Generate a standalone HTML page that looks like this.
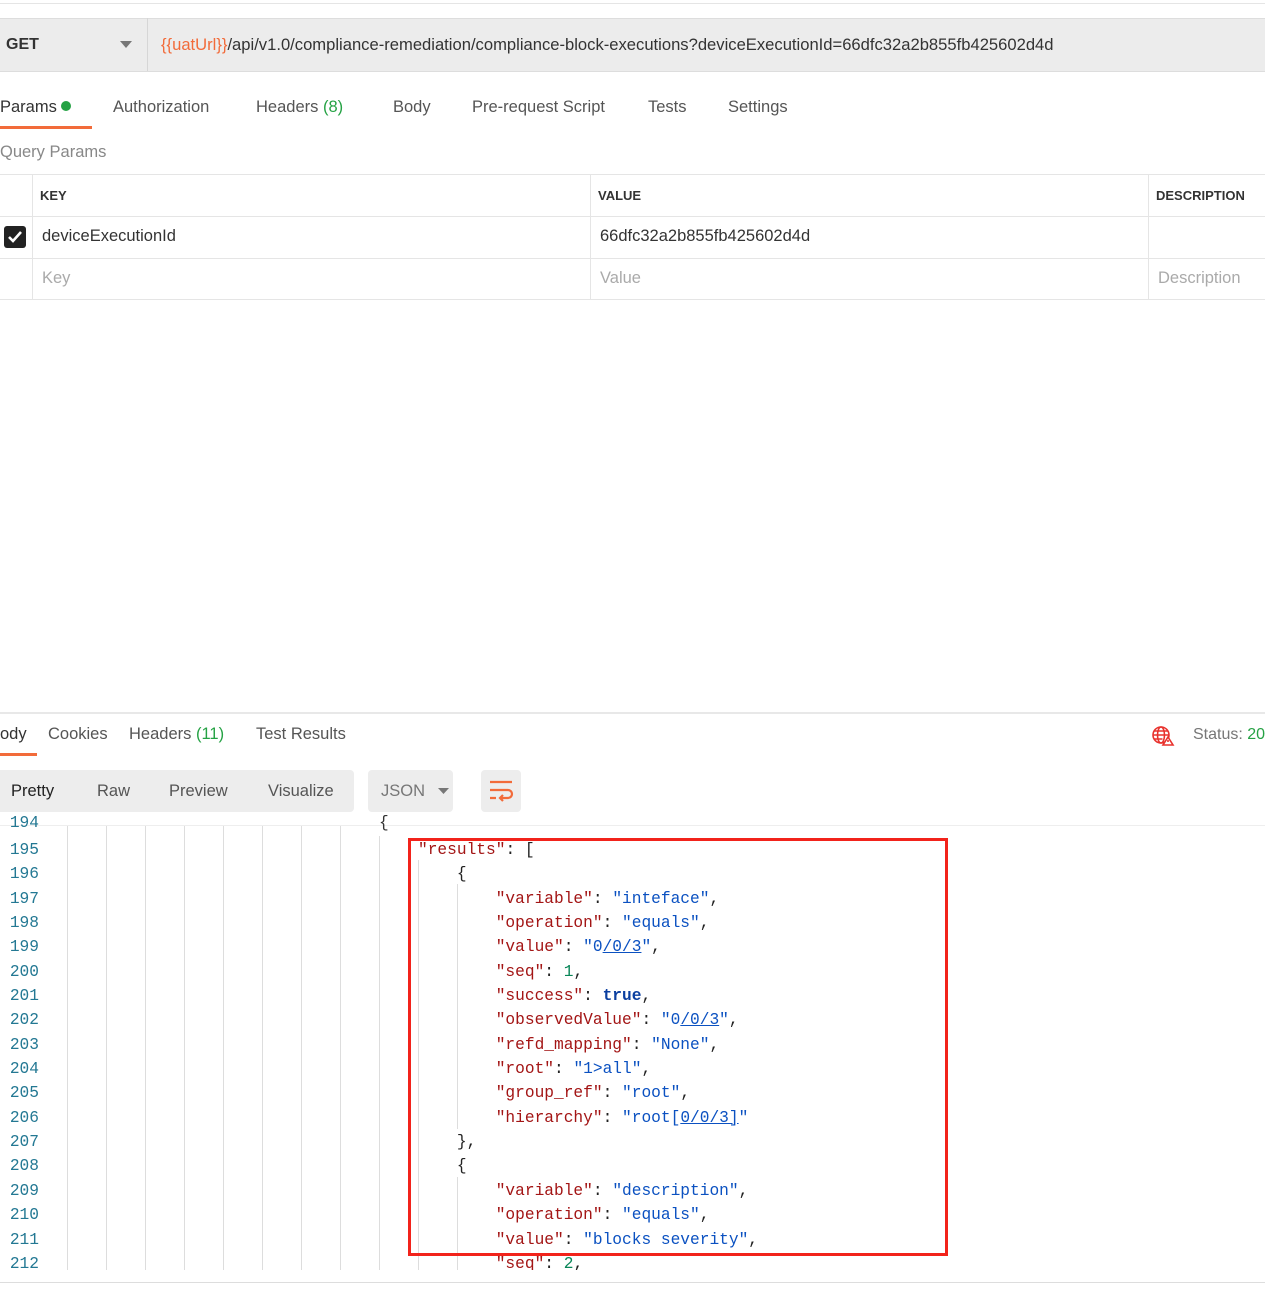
<!DOCTYPE html><html><head><style>
body{margin:0;width:1265px;height:1289px;position:relative;background:#fff;font-family:"Liberation Sans",sans-serif;overflow:hidden;color:#333}
.a{position:absolute;white-space:nowrap}
.t{font-size:16.5px;color:#555}
.g{color:#25a244}
.code{font-family:"Liberation Mono",monospace;font-size:16.2px}
.k{color:#a31515}.s{color:#0b51c1}.n{color:#098658}.b{color:#0b3fa0;font-weight:bold}
.ln{position:absolute;left:0;width:39px;text-align:right;color:#237893;font-family:"Liberation Mono",monospace;font-size:16.2px}
.vl{position:absolute;width:1px;background:#ddd}
</style></head><body>
<div class="a" style="left:0;top:3px;width:1265px;height:1px;background:#e5e5e5"></div>
<div class="a" style="left:0;top:18px;width:1265px;height:52px;background:#ececec;border-top:1px solid #ddd;border-bottom:1px solid #ddd"></div>
<div class="a" style="left:147px;top:18px;width:1px;height:53px;background:#d6d6d6"></div>
<div class="a" style="left:6px;top:36px;font-size:16px;font-weight:bold;color:#333">GET</div>
<svg class="a" style="left:120px;top:41px" width="12" height="8"><path d="M0 0h12L6 7z" fill="#777"/></svg>
<div class="a" style="left:161px;top:35px;font-size:16.6px;color:#333"><span style="color:#f26b3a">{{uatUrl}}</span>/api/v1.0/compliance-remediation/compliance-block-executions?deviceExecutionId=66dfc32a2b855fb425602d4d</div>
<div class="a t" style="left:0;top:98px;color:#333">Params <span style="display:inline-block;width:10px;height:10px;border-radius:50%;background:#25a244;vertical-align:1px"></span></div>
<div class="a" style="left:0;top:126px;width:92px;height:3px;background:#f26b3a"></div>
<div class="a t" style="left:113px;top:98px">Authorization</div>
<div class="a t" style="left:256px;top:98px">Headers <span class="g">(8)</span></div>
<div class="a t" style="left:393px;top:98px">Body</div>
<div class="a t" style="left:472px;top:98px">Pre-request Script</div>
<div class="a t" style="left:648px;top:98px">Tests</div>
<div class="a t" style="left:728px;top:98px">Settings</div>
<div class="a" style="left:0;top:143px;font-size:16.5px;color:#888">Query Params</div>
<div class="a" style="left:0;top:174px;width:1265px;height:1px;background:#e5e5e5"></div>
<div class="a" style="left:0;top:216px;width:1265px;height:1px;background:#e5e5e5"></div>
<div class="a" style="left:0;top:258px;width:1265px;height:1px;background:#e5e5e5"></div>
<div class="a" style="left:0;top:299px;width:1265px;height:1px;background:#e5e5e5"></div>
<div class="a" style="left:32px;top:174px;width:1px;height:126px;background:#e5e5e5"></div>
<div class="a" style="left:590px;top:174px;width:1px;height:126px;background:#e5e5e5"></div>
<div class="a" style="left:1148px;top:174px;width:1px;height:126px;background:#e5e5e5"></div>
<div class="a" style="left:40px;top:188px;font-size:13px;font-weight:bold;color:#333">KEY</div>
<div class="a" style="left:598px;top:188px;font-size:13px;font-weight:bold;color:#333">VALUE</div>
<div class="a" style="left:1156px;top:188px;font-size:13px;font-weight:bold;color:#333">DESCRIPTION</div>
<svg class="a" style="left:4px;top:226px" width="22" height="22"><rect width="22" height="22" rx="3" fill="#222"/><path d="M5 11l4 4 8-9" stroke="#fff" stroke-width="2.6" fill="none"/></svg>
<div class="a" style="left:42px;top:227px;font-size:16.5px;color:#333">deviceExecutionId</div>
<div class="a" style="left:600px;top:227px;font-size:16.5px;color:#333">66dfc32a2b855fb425602d4d</div>
<div class="a" style="left:42px;top:269px;font-size:16.5px;color:#aaa">Key</div>
<div class="a" style="left:600px;top:269px;font-size:16.5px;color:#aaa">Value</div>
<div class="a" style="left:1158px;top:269px;font-size:16.5px;color:#aaa">Description</div>
<div class="a" style="left:0;top:712px;width:1265px;height:2px;background:#e8e8e8"></div>
<div class="a t" style="left:0;top:725px;color:#333">ody</div>
<div class="a" style="left:0;top:753px;width:37px;height:3px;background:#f26b3a"></div>
<div class="a t" style="left:48px;top:725px">Cookies</div>
<div class="a t" style="left:129px;top:725px">Headers <span class="g">(11)</span></div>
<div class="a t" style="left:256px;top:725px">Test Results</div>
<svg class="a" style="left:1151px;top:725px" width="24" height="22" fill="none" stroke="#e8322d" stroke-width="1.6"><circle cx="10" cy="10" r="8"/><ellipse cx="10" cy="10" rx="3.5" ry="8"/><path d="M2 10h16M3.5 6h13M3.5 14h8"/><path d="M17 12l5 8h-10z" fill="#fff"/><path d="M17 15v2"/></svg>
<div class="a" style="left:1193px;top:726px;font-size:16px;color:#777">Status: <span class="g">20</span></div>
<div class="a" style="left:0;top:770px;width:354px;height:42px;background:#ededed;border-radius:0 4px 4px 0"></div>
<div class="a t" style="left:11px;top:782px;color:#222">Pretty</div>
<div class="a t" style="left:97px;top:782px">Raw</div>
<div class="a t" style="left:169px;top:782px">Preview</div>
<div class="a t" style="left:268px;top:782px">Visualize</div>
<div class="a" style="left:368px;top:770px;width:85px;height:42px;background:#ededed;border-radius:4px"></div>
<div class="a t" style="left:381px;top:782px;color:#777">JSON</div>
<svg class="a" style="left:438px;top:788px" width="11" height="7"><path d="M0 0h11L5.5 6z" fill="#777"/></svg>
<div class="a" style="left:481px;top:770px;width:40px;height:42px;background:#ededed;border-radius:4px"></div>
<svg class="a" style="left:488px;top:779px" width="26" height="24" fill="none" stroke="#f26b3a" stroke-width="2.2"><path d="M2 3h22M2 11h18a4 4 0 010 8h-7M2 19h6M15 16l-3 3 3 3"/></svg>
<div class="a" style="left:0;top:825px;width:1265px;height:1px;background:#eee"></div>
<div class="a" style="left:0;top:1282px;width:1265px;height:1px;background:#ddd"></div>
<div class="vl" style="left:67px;top:826px;height:444px"></div><div class="vl" style="left:106px;top:826px;height:444px"></div><div class="vl" style="left:145px;top:826px;height:444px"></div><div class="vl" style="left:184px;top:826px;height:444px"></div><div class="vl" style="left:223px;top:826px;height:444px"></div><div class="vl" style="left:262px;top:826px;height:444px"></div><div class="vl" style="left:301px;top:826px;height:444px"></div><div class="vl" style="left:340px;top:826px;height:444px"></div><div class="vl" style="left:379px;top:836px;height:434px"></div><div class="vl" style="left:418px;top:860px;height:410px"></div><div class="vl" style="left:457px;top:884px;height:245px"></div><div class="vl" style="left:457px;top:1177px;height:93px"></div>
<div class="ln" style="top:814px">194</div><div class="a code" style="left:379px;top:814px">{</div>
<div style="position:absolute;left:0;top:838px;line-height:24.35px">
<div class="ln" style="position:relative">195</div><div class="ln" style="position:relative">196</div><div class="ln" style="position:relative">197</div><div class="ln" style="position:relative">198</div><div class="ln" style="position:relative">199</div><div class="ln" style="position:relative">200</div><div class="ln" style="position:relative">201</div><div class="ln" style="position:relative">202</div><div class="ln" style="position:relative">203</div><div class="ln" style="position:relative">204</div><div class="ln" style="position:relative">205</div><div class="ln" style="position:relative">206</div><div class="ln" style="position:relative">207</div><div class="ln" style="position:relative">208</div><div class="ln" style="position:relative">209</div><div class="ln" style="position:relative">210</div><div class="ln" style="position:relative">211</div><div class="ln" style="position:relative">212</div>
</div>
<pre class="code" style="position:absolute;white-space:pre;left:418px;top:838px;margin:0;line-height:24.35px;color:#222"><span class="k">"results"</span>: [
    {
        <span class="k">"variable"</span>: <span class="s">"inteface"</span>,
        <span class="k">"operation"</span>: <span class="s">"equals"</span>,
        <span class="k">"value"</span>: <span class="s">"0<u>/0/3</u>"</span>,
        <span class="k">"seq"</span>: <span class="n">1</span>,
        <span class="k">"success"</span>: <span class="b">true</span>,
        <span class="k">"observedValue"</span>: <span class="s">"0<u>/0/3</u>"</span>,
        <span class="k">"refd_mapping"</span>: <span class="s">"None"</span>,
        <span class="k">"root"</span>: <span class="s">"1&gt;all"</span>,
        <span class="k">"group_ref"</span>: <span class="s">"root"</span>,
        <span class="k">"hierarchy"</span>: <span class="s">"root[<u>0/0/3]</u>"</span>
    },
    {
        <span class="k">"variable"</span>: <span class="s">"description"</span>,
        <span class="k">"operation"</span>: <span class="s">"equals"</span>,
        <span class="k">"value"</span>: <span class="s">"blocks severity"</span>,
        <span class="k">"seq"</span>: <span class="n">2</span>,</pre>
<div class="a" style="left:0;top:1270px;width:1265px;height:12px;background:#fff"></div>
<div class="a" style="left:408px;top:838px;width:534px;height:412px;border:3px solid #f2231b"></div>
</body></html>
